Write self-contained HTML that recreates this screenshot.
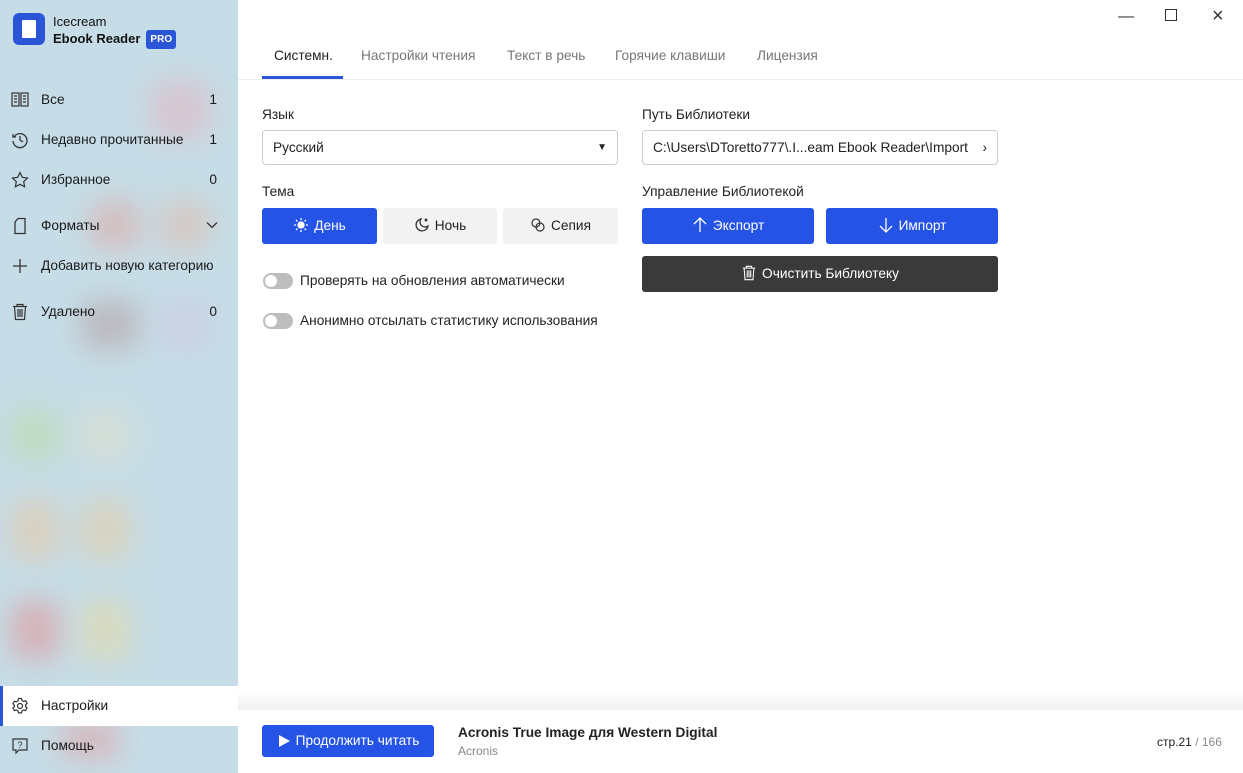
<!DOCTYPE html>
<html><head><meta charset="utf-8"><style>
*{box-sizing:border-box;margin:0;padding:0}
body{width:1243px;height:773px;overflow:hidden;font-family:"Liberation Sans","Noto Sans CJK SC",sans-serif;font-size:13.7px;color:#222;background:#fff;position:relative}
.sb{position:absolute;left:0;top:0;width:238px;height:773px;background:#c6dde7;overflow:hidden}
.blob{position:absolute;border-radius:12px;filter:blur(14px);opacity:.45}
.logo{position:absolute;left:13px;top:13px;width:32px;height:32px;border-radius:6px;background:#2a55d6}
.logo i{position:absolute;left:9px;top:7px;width:14px;height:18px;background:#fff;border-radius:1px}
.lt{position:absolute;left:53px;top:13px;font-size:13px;line-height:17px;color:#111}
.pro{display:inline-block;background:#2a55d6;color:#fff;font-size:10px;font-weight:bold;padding:1px 4px;border-radius:3px;margin-left:6px;vertical-align:1px}
.it{position:absolute;left:0;width:238px;height:40px;line-height:40px;padding-left:41px;font-size:13.7px;color:#1a1a1a}
.it .n{position:absolute;right:21px;top:0}
.it svg{position:absolute;left:11px;top:11px}
.act{background:#fff;border-left:3px solid #2a55d6}
.tabs{position:absolute;left:262px;top:48px;font-size:13.7px;color:#777}
.tabs span{position:absolute;white-space:nowrap}
.ul{position:absolute;left:262px;top:76px;width:81px;height:3px;background:#2a55d6}
.hr{position:absolute;left:238px;top:79px;right:0;height:1px;background:#eee}
.lbl{position:absolute;font-size:13.7px;color:#222;white-space:nowrap}
.box{position:absolute;height:35px;border:1px solid #ccc;border-radius:4px;line-height:33px;padding-left:10px;font-size:13.7px;color:#222}
.btn{position:absolute;height:36px;border-radius:3px;line-height:36px;text-align:center;font-size:13.7px}
.btn svg{vertical-align:-3px;margin-right:5px}
.blue{background:#2453e6;color:#fff}
.gray{background:#f2f2f2;color:#222}
.tog{position:absolute;left:263px;width:30px;height:16px;border-radius:8px;background:#bdbdbd}
.tog:after{content:"";position:absolute;left:2px;top:2px;width:12px;height:12px;border-radius:50%;background:#fff}
.win{position:absolute;top:8px;font-size:16px;color:#333}
</style></head><body>
<div class="sb">
<div class="blob" style="left:150px;top:80px;width:60px;height:60px;background:#e9a9b4"></div>
<div class="blob" style="left:90px;top:200px;width:50px;height:50px;background:#e69a8f"></div>
<div class="blob" style="left:160px;top:200px;width:50px;height:50px;background:#e6b19a"></div>
<div class="blob" style="left:80px;top:300px;width:60px;height:50px;background:#b09090"></div>
<div class="blob" style="left:160px;top:300px;width:50px;height:50px;background:#d0c0e0"></div>
<div class="blob" style="left:10px;top:410px;width:50px;height:50px;background:#b8d890"></div>
<div class="blob" style="left:80px;top:410px;width:50px;height:50px;background:#e8e0c0"></div>
<div class="blob" style="left:10px;top:500px;width:50px;height:60px;background:#f0c090"></div>
<div class="blob" style="left:80px;top:500px;width:50px;height:60px;background:#f0c890"></div>
<div class="blob" style="left:10px;top:600px;width:50px;height:60px;background:#e88080"></div>
<div class="blob" style="left:80px;top:600px;width:50px;height:60px;background:#f0d890"></div>
<div class="blob" style="left:60px;top:720px;width:60px;height:40px;background:#e89090"></div>
<div class="logo"><i></i></div>
<div class="lt">Icecream<br><b>Ebook Reader</b><span class="pro">PRO</span></div>
<div class="it" style="top:80px"><svg width="18" height="18" viewBox="0 0 18 18" fill="none" stroke="#333" stroke-width="1.2"><rect x="1" y="2" width="7" height="13"/><rect x="10" y="2" width="7" height="13"/><path d="M3 5h3M3 8h3M3 11h3M12 5h3M12 8h3M12 11h3"/></svg>Все<span class="n">1</span></div>
<div class="it" style="top:120px"><svg width="18" height="18" viewBox="0 0 18 18" fill="none" stroke="#333" stroke-width="1.3"><path d="M3 6A7 7 0 1 1 2 10M2 3v3h3M9 5v4l3 2"/></svg>Недавно прочитанные<span class="n">1</span></div>
<div class="it" style="top:160px"><svg width="18" height="18" viewBox="0 0 18 18" fill="none" stroke="#333" stroke-width="1.2"><path d="M9 1.5l2.3 4.8 5.2.7-3.8 3.6.9 5.2L9 13.3 4.4 15.8l.9-5.2L1.5 7l5.2-.7z"/></svg>Избранное<span class="n">0</span></div>
<div class="it" style="top:206px"><svg width="18" height="18" viewBox="0 0 18 18" fill="none" stroke="#333" stroke-width="1.3"><path d="M7 1.5h7v15H4V5z"/></svg>Форматы<svg style="left:206px;top:15px" width="12" height="8" viewBox="0 0 12 8" fill="none" stroke="#333" stroke-width="1.3"><path d="M1 1.5l5 5 5-5"/></svg></div>
<div class="it" style="top:246px"><svg width="18" height="18" viewBox="0 0 18 18" fill="none" stroke="#333" stroke-width="1.3"><path d="M9 2v14M2 9h14"/></svg>Добавить новую категорию</div>
<div class="it" style="top:292px"><svg width="18" height="18" viewBox="0 0 18 18" fill="none" stroke="#333" stroke-width="1.2"><path d="M2 3.5h14M6 3.5V1.5h6v2M3.5 3.5l1 13h9l1-13M7 6v8M9 6v8M11 6v8"/></svg>Удалено<span class="n">0</span></div>
<div class="it act" style="top:686px;padding-left:38px"><svg style="left:8px" width="18" height="18" viewBox="0 0 18 18" fill="none" stroke="#333" stroke-width="1.2"><circle cx="9" cy="9" r="2.5"/><path d="M7.5 1.5h3l.5 2 1.6.9 2-.6 1.5 2.6-1.5 1.4v1.8l1.5 1.4-1.5 2.6-2-.6-1.6.9-.5 2h-3l-.5-2-1.6-.9-2 .6-1.5-2.6 1.5-1.4V8.2L1.9 6.8 3.4 4.2l2 .6L7 3.9z"/></svg>Настройки</div>
<div class="it" style="top:726px"><svg width="18" height="18" viewBox="0 0 18 18" fill="none" stroke="#333" stroke-width="1.2"><path d="M2 2h14v11H8l-3 3v-3H2z"/><text x="9" y="11" font-size="9" text-anchor="middle" fill="#333" stroke="none">?</text></svg>Помощь</div>
</div>
<div class="win" style="left:1118px">&#8212;</div>
<div class="win" style="left:1165px;top:9px;width:12px;height:12px;border:1.2px solid #333"></div>
<div class="win" style="left:1212px;top:5px;font-size:20px">&#215;</div>
<div class="tabs"><span style="left:12px;color:#222">Системн.</span><span style="left:99px">Настройки чтения</span><span style="left:245px">Текст в речь</span><span style="left:353px">Горячие клавиши</span><span style="left:495px">Лицензия</span></div>
<div class="ul"></div><div class="hr"></div>
<div class="lbl" style="left:262px;top:107px">Язык</div>
<div class="box" style="left:262px;top:130px;width:356px">Русский<span style="position:absolute;right:10px;font-size:10px">&#9660;</span></div>
<div class="lbl" style="left:262px;top:184px">Тема</div>
<div class="btn blue" style="left:262px;top:208px;width:115px"><svg width="16" height="16" viewBox="0 0 16 16" fill="none" stroke="#fff" stroke-width="1.3"><circle cx="8" cy="8" r="3" fill="#fff"/><path d="M8 1v2M8 13v2M1 8h2M13 8h2M3 3l1.4 1.4M11.6 11.6L13 13M3 13l1.4-1.4M11.6 4.4L13 3"/></svg>День</div>
<div class="btn gray" style="left:383px;top:208px;width:114px"><svg width="16" height="16" viewBox="0 0 16 16" fill="none" stroke="#333" stroke-width="1.3"><path d="M7 2a6 6 0 1 0 7 7A5 5 0 0 1 7 2z"/><circle cx="12" cy="3" r=".8" fill="#333"/></svg>Ночь</div>
<div class="btn gray" style="left:503px;top:208px;width:115px"><svg width="16" height="16" viewBox="0 0 16 16" fill="none" stroke="#333" stroke-width="1.2"><circle cx="6" cy="6" r="4"/><circle cx="10" cy="10" r="4"/></svg>Сепия</div>
<div class="tog" style="top:273px"></div><div class="lbl" style="left:300px;top:273px">Проверять на обновления автоматически</div>
<div class="tog" style="top:313px"></div><div class="lbl" style="left:300px;top:313px">Анонимно отсылать статистику использования</div>
<div class="lbl" style="left:642px;top:107px">Путь Библиотеки</div>
<div class="box" style="left:642px;top:130px;width:356px">C:\Users\DToretto777\.I...eam Ebook Reader\Import<span style="position:absolute;right:10px">&#8250;</span></div>
<div class="lbl" style="left:642px;top:184px">Управление Библиотекой</div>
<div class="btn blue" style="left:642px;top:208px;width:172px"><svg width="16" height="16" viewBox="0 0 16 16" fill="none" stroke="#fff" stroke-width="1.3"><path d="M8 15V1M2 7l6-6 6 6"/></svg>Экспорт</div>
<div class="btn blue" style="left:826px;top:208px;width:172px"><svg width="16" height="16" viewBox="0 0 16 16" fill="none" stroke="#fff" stroke-width="1.3"><path d="M8 1v14M2 9l6 6 6-6"/></svg>Импорт</div>
<div class="btn" style="left:642px;top:256px;width:356px;background:#3a3a3a;color:#fff"><svg width="16" height="16" viewBox="0 0 18 18" fill="none" stroke="#fff" stroke-width="1.2"><path d="M2 3.5h14M6 3.5V1.5h6v2M3.5 3.5l1 13h9l1-13M7 6v8M9 6v8M11 6v8"/></svg>Очистить Библиотеку</div>
<div style="position:absolute;left:238px;right:0;top:690px;height:20px;background:linear-gradient(#fff,#f0f0f0)"></div>
<div class="btn blue" style="left:262px;top:725px;width:172px;height:32px;line-height:32px"><svg width="14" height="14" viewBox="0 0 14 14"><path d="M2 1l11 6-11 6z" fill="#fff"/></svg>Продолжить читать</div>
<div class="lbl" style="left:458px;top:725px;font-weight:bold">Acronis True Image для Western Digital</div>
<div class="lbl" style="left:458px;top:744px;font-size:12px;color:#888">Acronis</div>
<div class="lbl" style="left:1157px;top:735px;font-size:12px">стр.21 <span style="color:#888">/ 166</span></div>
</body></html>
